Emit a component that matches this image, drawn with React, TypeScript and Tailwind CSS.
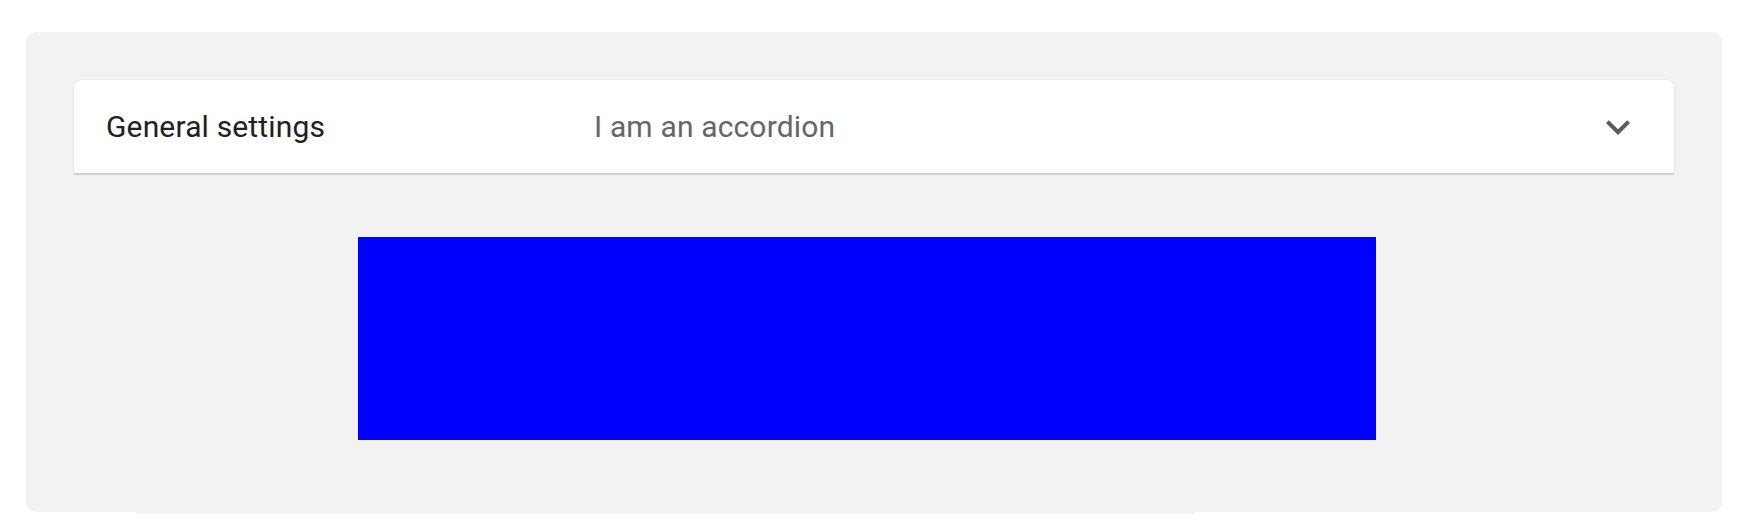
import React from "react";

function ExpandMore() {
  return (
    <svg viewBox="0 0 24 24" className="h-[48px] w-[48px] shrink-0 fill-[#5c5c5c]">
      <path d="M16.59 8.59 12 13.17 7.41 8.59 6 10l6 6 6-6z" />
    </svg>
  );
}

export default function App() {
  return (
    <div className="min-h-[532px] bg-white pt-[32px] font-['Roboto',sans-serif]">
      {/* gray demo frame */}
      <div className="ml-[26px] w-[1696px] rounded-[10px] bg-[#f2f2f2] px-[48px] pt-[48px] pb-[72px]">
        <div className="rounded-t-[8px] bg-white shadow-[0_2px_1px_0_rgba(0,0,0,0.12),0_0_2px_0_rgba(0,0,0,0.1)]">
          <div className="flex h-[93px] items-center px-[32px]">
            <div className="flex min-w-0 flex-1 items-center tracking-[0.00938em]">
              <span className="w-[488px] shrink-0 text-[30px] leading-[45px] text-[#212121]">
                General settings
              </span>
              <span className="text-[30px] leading-[45px] text-[#666666]">I am an accordion</span>
            </div>
            <ExpandMore />
          </div>
        </div>

        <div className="ml-[284px] mt-[64px] h-[203px] w-[1018px] bg-[#0000ff]" />
      </div>
      <div className="ml-[136px] h-[2px] w-[1059px] bg-[#f2f2f2]" />
    </div>
  );
}
